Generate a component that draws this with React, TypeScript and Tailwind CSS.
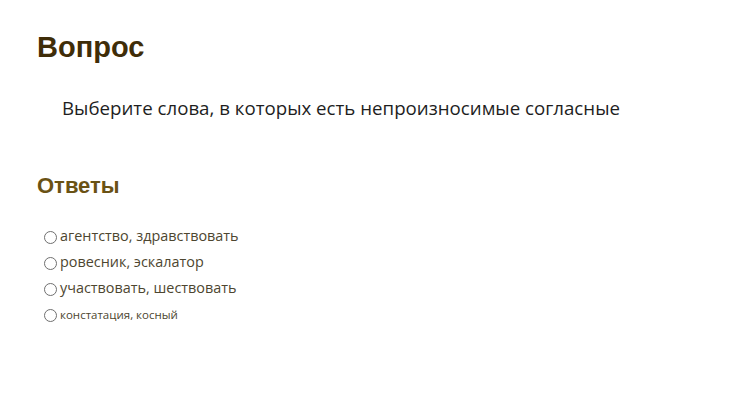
const answers = [
  { text: "агентство, здравствовать", small: false },
  { text: "ровесник, эскалатор", small: false },
  { text: "участвовать, шествовать", small: false },
  { text: "констатация, косный", small: true },
];

export default function App() {
  return (
    <main className="min-h-screen w-full bg-white px-[37px] pt-[30px] font-['Liberation_Sans',sans-serif]">
      <h1 className="text-[29px] font-bold leading-[34px] text-[#3f2d08]">Вопрос</h1>

      <p className="mt-[31px] pl-[25px] font-['Open_Sans',sans-serif] text-[18.7px] leading-[26px] text-[#1e1e1e]">
        Выберите слова, в которых есть непроизносимые согласные
      </p>

      <h2 className="mt-[52px] text-[22px] font-bold leading-[26px] text-[#6a5214]">Ответы</h2>

      <ul className="mt-[27px] flex flex-col gap-[6px] pl-[7px]">
        {answers.map((a) => (
          <li key={a.text} className="flex h-[20px] items-center gap-[3px]">
            <span className="mt-[3px] h-[13px] w-[13px] shrink-0 rounded-full border border-[#6f6f6f] bg-white" />
            <span
              className={
                a.small
                  ? "mt-[2px] font-['Open_Sans',sans-serif] text-[11.5px] text-[#4d4630]"
                  : "font-['Open_Sans',sans-serif] text-[14.4px] text-[#4d4630]"
              }
            >
              {a.text}
            </span>
          </li>
        ))}
      </ul>
    </main>
  );
}
